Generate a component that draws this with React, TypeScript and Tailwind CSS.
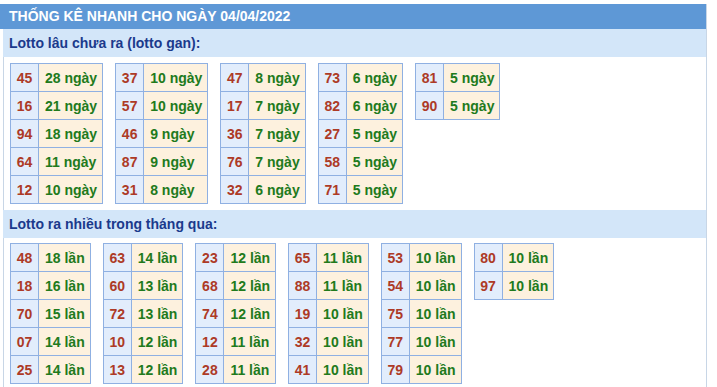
import React from "react";

// ─── Data ─────────────────────────────────────────────────────────────────────

const gan: [string, string][][] = [
  [["45", "28"], ["16", "21"], ["94", "18"], ["64", "11"], ["12", "10"]],
  [["37", "10"], ["57", "10"], ["46", "9"], ["87", "9"], ["31", "8"]],
  [["47", "8"], ["17", "7"], ["36", "7"], ["76", "7"], ["32", "6"]],
  [["73", "6"], ["82", "6"], ["27", "5"], ["58", "5"], ["71", "5"]],
  [["81", "5"], ["90", "5"]],
];

const nhieu: [string, string][][] = [
  [["48", "18"], ["18", "16"], ["70", "15"], ["07", "14"], ["25", "14"]],
  [["63", "14"], ["60", "13"], ["72", "13"], ["10", "12"], ["13", "12"]],
  [["23", "12"], ["68", "12"], ["74", "12"], ["12", "11"], ["28", "11"]],
  [["65", "11"], ["88", "11"], ["19", "10"], ["32", "10"], ["41", "10"]],
  [["53", "10"], ["54", "10"], ["75", "10"], ["77", "10"], ["79", "10"]],
  [["80", "10"], ["97", "10"]],
];

// ─── Pieces ───────────────────────────────────────────────────────────────────

function LottoTable({ rows, unit }: { rows: [string, string][]; unit: string }) {
  return (
    <table className="border-collapse self-start">
      <tbody>
        {rows.map(([num, count]) => (
          <tr key={num} className="h-[28px]">
            <td className="w-[28px] min-w-[28px] border border-[#8fb0e2] bg-[#e2edfc] p-0 text-center text-[#ad3a26] leading-none">
              {num}
            </td>
            <td className="border border-[#8fb0e2] bg-[#fdf1de] pl-[6px] pr-[5px] text-[#217a1c] leading-none whitespace-nowrap">
              {count} {unit}
            </td>
          </tr>
        ))}
      </tbody>
    </table>
  );
}

function SubHeader({ children }: { children: React.ReactNode }) {
  return (
    <div className="h-[28px] flex items-center bg-[#d3e6f9] px-[6px] text-[14px] font-bold text-[#1b3a8c]">
      {children}
    </div>
  );
}

// ─── Page ─────────────────────────────────────────────────────────────────────

export default function App() {
  return (
    <div className="bg-white pt-[4px] font-['Liberation_Sans',Arial,sans-serif]">
      <div className="w-[707px] border-r border-[#c8d6e6]">
        <div className="h-[25px] flex items-center bg-[#5e98d6] px-[9px] text-[14px] font-bold text-white">
          THỐNG KÊ NHANH CHO NGÀY 04/04/2022
        </div>
        <div className="ml-[3px] border-l border-[#c8d6e6]">
          <div className="-ml-[1px]">
            <SubHeader>Lotto lâu chưa ra (lotto gan):</SubHeader>
          </div>
          <div className="flex gap-[12px] pl-[6px] pt-[6px] pb-[6px] text-[14px] font-bold">
            {gan.map((rows, i) => (
              <LottoTable key={i} rows={rows} unit="ngày" />
            ))}
          </div>
          <div className="-ml-[1px]">
            <SubHeader>Lotto ra nhiều trong tháng qua:</SubHeader>
          </div>
          <div className="flex gap-[12px] pl-[6px] pt-[5px] pb-[6px] text-[14px] font-bold">
            {nhieu.map((rows, i) => (
              <LottoTable key={i} rows={rows} unit="lần" />
            ))}
          </div>
        </div>
      </div>
    </div>
  );
}
